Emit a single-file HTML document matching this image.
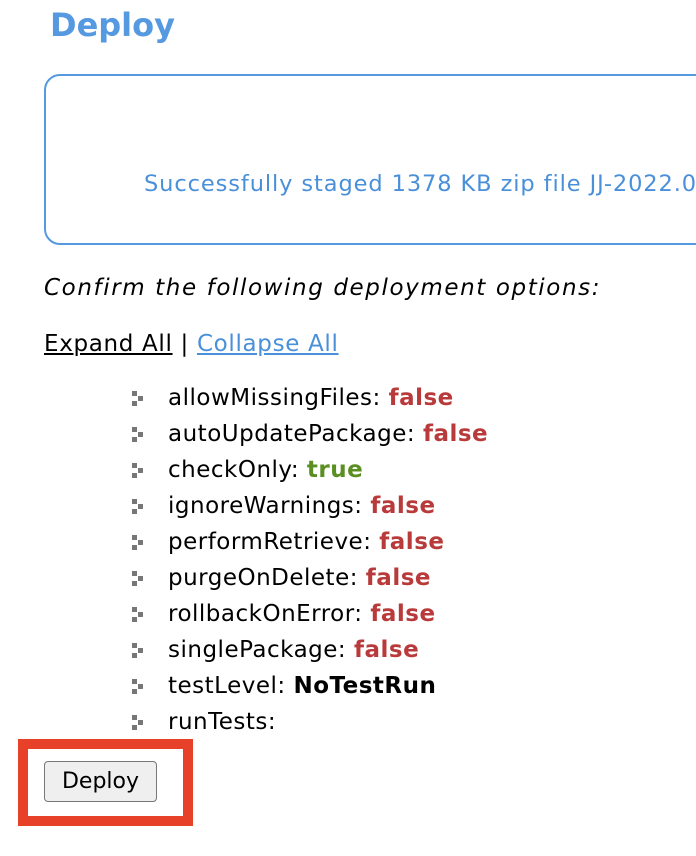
<!DOCTYPE html>
<html><head><style>
body{margin:0;width:696px;height:856px;overflow:hidden;background:#fff;font-family:"DejaVu Sans",Verdana,sans-serif;position:relative}
.a{position:absolute;white-space:nowrap}
h1{position:absolute;left:50px;top:6px;margin:0;font-size:32px;font-weight:bold;color:#5599e0}
.box{position:absolute;left:44px;top:74px;width:700px;height:167px;border:2px solid #5599e0;border-radius:16px}
.msg{left:144px;top:171px;font-size:22.5px;color:#4a90d9;letter-spacing:0.9px}
.conf{left:44px;top:275px;font-size:23px;font-style:italic;color:#000;letter-spacing:1.6px}
.ex{left:44px;top:331px;font-size:23px;letter-spacing:0.67px}
.ex u{text-decoration:underline}
.ex .c{color:#4a90d9}
.li{left:132px;font-size:23px;color:#000;letter-spacing:0.5px}
.li .b{display:inline-block;width:14px;height:16px;vertical-align:-2px;margin-right:22px;position:relative}
.li .b i{position:absolute;width:5px;height:5px;background:#777}
.f{color:#b93a3a;font-weight:bold}
.t{color:#5c8f22;font-weight:bold}
.red{position:absolute;left:18px;top:739px;width:155px;height:67px;border:10px solid #e8412a}
.btn{position:absolute;left:44px;top:761px;width:111px;height:39px;border:1px solid #777;border-radius:4px;background:#efefef;font-size:22px;text-align:center;line-height:39px;box-sizing:content-box}
</style></head><body>
<h1>Deploy</h1>
<div class="box"></div>
<div class="a msg">Successfully staged 1378 KB zip file JJ-2022.0</div>
<div class="a conf">Confirm the following deployment options:</div>
<div class="a ex"><u>Expand All</u> | <u class="c">Collapse All</u></div>
<div class="a li" style="top:385px"><span class="b"><i style="left:0;top:0"></i><i style="left:6px;top:5px"></i><i style="left:0;top:10px"></i></span>allowMissingFiles: <span class="f">false</span></div>
<div class="a li" style="top:421px"><span class="b"><i style="left:0;top:0"></i><i style="left:6px;top:5px"></i><i style="left:0;top:10px"></i></span>autoUpdatePackage: <span class="f">false</span></div>
<div class="a li" style="top:457px"><span class="b"><i style="left:0;top:0"></i><i style="left:6px;top:5px"></i><i style="left:0;top:10px"></i></span>checkOnly: <span class="t">true</span></div>
<div class="a li" style="top:493px"><span class="b"><i style="left:0;top:0"></i><i style="left:6px;top:5px"></i><i style="left:0;top:10px"></i></span>ignoreWarnings: <span class="f">false</span></div>
<div class="a li" style="top:529px"><span class="b"><i style="left:0;top:0"></i><i style="left:6px;top:5px"></i><i style="left:0;top:10px"></i></span>performRetrieve: <span class="f">false</span></div>
<div class="a li" style="top:565px"><span class="b"><i style="left:0;top:0"></i><i style="left:6px;top:5px"></i><i style="left:0;top:10px"></i></span>purgeOnDelete: <span class="f">false</span></div>
<div class="a li" style="top:601px"><span class="b"><i style="left:0;top:0"></i><i style="left:6px;top:5px"></i><i style="left:0;top:10px"></i></span>rollbackOnError: <span class="f">false</span></div>
<div class="a li" style="top:637px"><span class="b"><i style="left:0;top:0"></i><i style="left:6px;top:5px"></i><i style="left:0;top:10px"></i></span>singlePackage: <span class="f">false</span></div>
<div class="a li" style="top:673px"><span class="b"><i style="left:0;top:0"></i><i style="left:6px;top:5px"></i><i style="left:0;top:10px"></i></span>testLevel: <b>NoTestRun</b></div>
<div class="a li" style="top:709px"><span class="b"><i style="left:0;top:0"></i><i style="left:6px;top:5px"></i><i style="left:0;top:10px"></i></span>runTests:</div>
<div class="red"></div>
<div class="btn">Deploy</div>
</body></html>
